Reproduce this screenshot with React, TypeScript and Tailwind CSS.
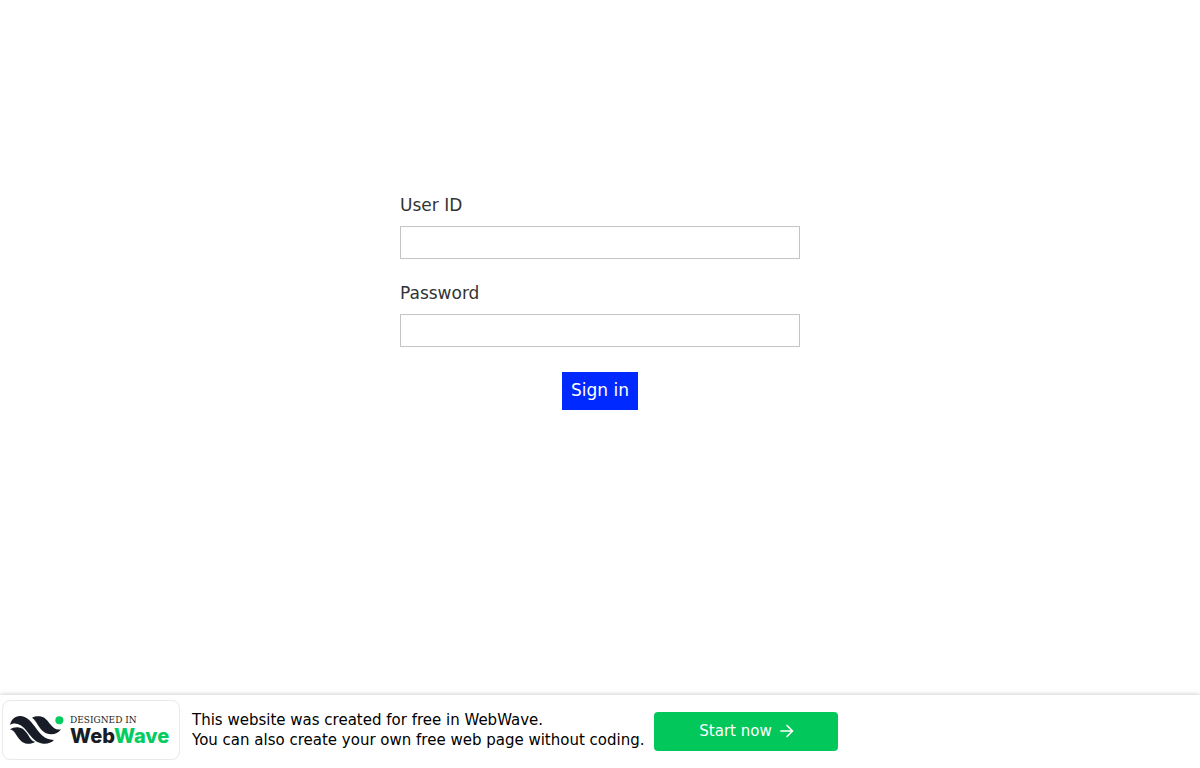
import React from "react";

function WaveMark() {
  return (
    <svg viewBox="0 0 162 90" className="mt-0.5 h-[30px] w-[54px] shrink-0" aria-hidden="true">
      <g fill="#181c27">
        <path d="M0 27 C4 10 14 1 30 0 C50 0 62 16 74 31 C90 54 102 71 132 72 C124 81 112 84 100 83 C80 81 69 69 57 54 C43 34 33 25 18 23 C10 22 4 24 0 27 Z" />
        <path d="M66 5 C74 1 82 0 90 1 C105 3 112 14 121 25 C131 38 140 43 153 40 C146 50 136 55 124 55 C104 55 94 42 84 28 C78 17 73 9 66 5 Z" />
        <path d="M0 40 C6 36 13 34 21 34 C38 34 46 45 54 56 C62 69 66 76 76 77 C68 82 60 84 50 83 C35 81 27 69 19 57 C13 47 8 42 0 40 Z" />
      </g>
      <circle cx="148" cy="13" r="12" fill="#05cc5e" />
    </svg>
  );
}

function Field({ id, label, type }: { id: string; label: string; type: string }) {
  return (
    <div className="flex flex-col gap-[11px]">
      <label htmlFor={id} className="text-[17px] leading-5 text-[#333]">
        {label}
      </label>
      <input
        id={id}
        type={type}
        className="h-[33px] w-full border border-[#c4c4c4] bg-white px-2 text-base outline-none focus:border-[#0029ff]"
      />
    </div>
  );
}

export default function App() {
  return (
    <div className="flex min-h-screen flex-col bg-white font-['DejaVu_Sans',sans-serif]">
      <main className="flex grow justify-center px-4 pt-[195px] pb-8">
        <form className="flex w-full max-w-[400px] flex-col gap-6" onSubmit={(e) => e.preventDefault()}>
          <Field id="user-id" label="User ID" type="text" />
          <Field id="password" label="Password" type="password" />
          <button
            type="submit"
            className="mt-px flex h-[38px] w-[76px] items-center justify-center self-center bg-[#0029ff] pb-px text-[17px] whitespace-nowrap text-white"
          >
            Sign in
          </button>
        </form>
      </main>
      <footer className="flex items-center bg-white px-0.5 pt-[5px] pb-2 shadow-[0_0_5px_rgba(0,0,0,0.25)]">
        <a
          href="#webwave"
          className="flex h-[60px] w-[178px] shrink-0 items-center gap-1.5 rounded-lg border border-[#e9e9e9] pl-[7px]"
        >
          <WaveMark />
          <span className="flex flex-col">
            <span className="font-['DejaVu_Serif',serif] text-[9px] leading-3 whitespace-nowrap text-[#222]">
              DESIGNED IN
            </span>
            <span className="font-['Inter',sans-serif] text-[20px] leading-5 font-extrabold text-[#181c27]">
              Web<span className="text-[#05cc5e]">Wave</span>
            </span>
          </span>
        </a>
        <p className="ml-3 text-[15px] leading-5 text-black">
          This website was created for free in WebWave.
          <br />
          You can also create your own free web page without coding.
        </p>
        <a
          href="#start"
          className="mt-0.5 ml-2.5 flex h-[39px] w-[184px] shrink-0 items-center justify-center gap-2 rounded bg-[#02c85b] text-[15px] leading-5 text-white"
        >
          Start now
          <svg
            viewBox="0 0 14 14"
            className="size-3.5"
            fill="none"
            stroke="currentColor"
            strokeWidth="1.7"
            strokeLinecap="round"
            strokeLinejoin="round"
            aria-hidden="true"
          >
            <path d="M1 7 H12 M7 1.5 L12.5 7 L7 12.5" />
          </svg>
        </a>
      </footer>
    </div>
  );
}
